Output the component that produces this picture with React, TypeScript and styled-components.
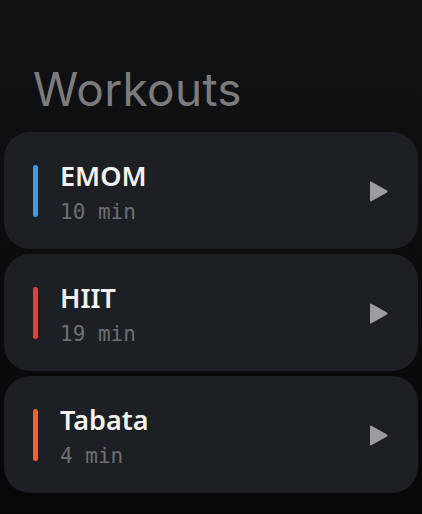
import React from "react";
import styled, { createGlobalStyle } from "styled-components";

const GlobalStyle = createGlobalStyle`
  html, body {
    margin: 0;
    padding: 0;
    background: #0a0b0d;
  }
  body {
    font-family: "Inter", "Noto Sans", sans-serif;
  }
`;

const Screen = styled.div`
  width: 422px;
  height: 514px;
  box-sizing: border-box;
  padding: 61px 4px 0;
  background: linear-gradient(180deg, #111214 0%, #060708 100%);
  display: flex;
  flex-direction: column;
  overflow: hidden;
`;

const Title = styled.h1`
  margin: 0 0 14px 29px;
  font-size: 46px;
  font-weight: 400;
  line-height: 57px;
  color: #7c7c7e;
  letter-spacing: 0.3px;
`;

const List = styled.div`
  display: flex;
  flex-direction: column;
  gap: 5px;
`;

const Card = styled.div`
  height: 117px;
  box-sizing: border-box;
  border-radius: 26px;
  background: #1c1f23;
  display: flex;
  align-items: center;
  padding: 0 30px 0 29px;
`;

const Accent = styled.div<{ $color: string }>`
  width: 5px;
  height: 52px;
  border-radius: 3px;
  background: ${(p) => p.$color};
  flex-shrink: 0;
`;

const Info = styled.div`
  flex: 1;
  display: flex;
  flex-direction: column;
  margin-left: 22px;
  padding-top: 2px;
  gap: 8px;
`;

const Name = styled.div`
  font-family: "Noto Sans", "Inter", sans-serif;
  font-size: 27px;
  font-weight: 600;
  line-height: 32px;
  color: #f2f2f0;
`;

const Duration = styled.div`
  font-family: "DejaVu Sans Mono", "Liberation Mono", monospace;
  font-size: 21px;
  line-height: 24px;
  color: #6c6f73;
`;

const Play = styled.svg`
  width: 18px;
  height: 21px;
  flex-shrink: 0;
  margin-top: 2px;
`;

const workouts = [
  { name: "EMOM", minutes: 10, color: "#3d9be9" },
  { name: "HIIT", minutes: 19, color: "#e8412f" },
  { name: "Tabata", minutes: 4, color: "#f2622a" },
];

export default function App() {
  return (
    <>
      <GlobalStyle />
      <Screen>
        <Title>Workouts</Title>
        <List>
          {workouts.map((w) => (
            <Card key={w.name}>
              <Accent $color={w.color} />
              <Info>
                <Name>{w.name}</Name>
                <Duration>{w.minutes} min</Duration>
              </Info>
              <Play viewBox="0 0 18 21">
                <path d="M0 1.5 Q0 0 1.4 0.8 L17 9.6 Q18 10.5 17 11.4 L1.4 20.2 Q0 21 0 19.5 Z" fill="#9b9da1" />
              </Play>
            </Card>
          ))}
        </List>
      </Screen>
    </>
  );
}
